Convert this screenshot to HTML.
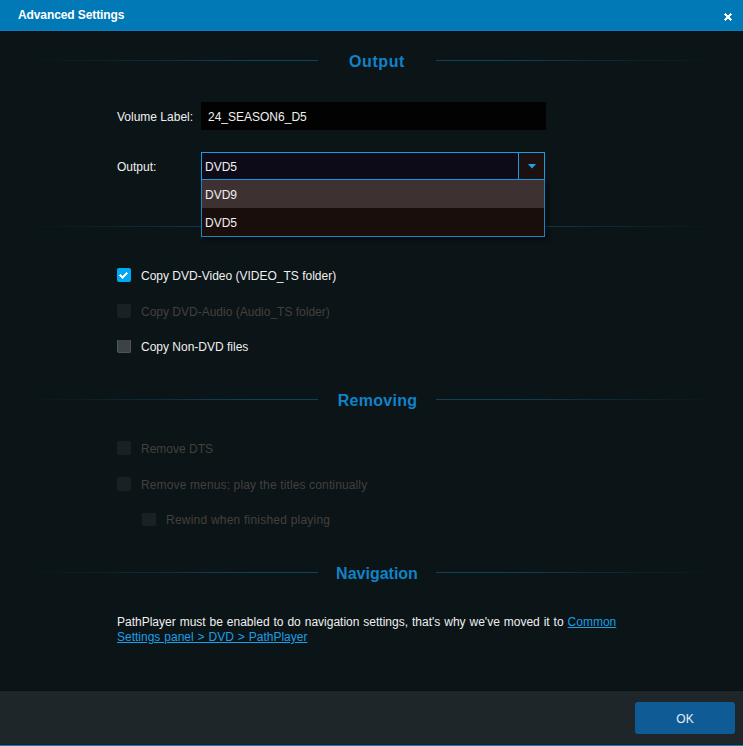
<!DOCTYPE html>
<html><head><meta charset="utf-8">
<style>
html,body{margin:0;padding:0;}
body{width:743px;height:746px;position:relative;overflow:hidden;background:#0b1417;font-family:"Liberation Sans",sans-serif;font-size:12px;color:#f0f0f0;}
.abs{position:absolute;}
#title{left:0;top:0;width:743px;height:31px;background:#0079b6;box-shadow:inset 0 -1px 0 #0282c4;}
#tline{left:0;top:31px;width:743px;height:1px;background:#0a0d0f;}
#title .t{left:18px;top:8px;letter-spacing:-0.1px;font-weight:bold;font-size:12px;color:#fff;line-height:15px;}
.line{height:1px;}
.ll{left:20px;width:703px;background:linear-gradient(to right,rgba(13,66,92,0) 0px,rgba(13,66,92,0.2) 60px,rgba(13,66,92,0.55) 140px,rgba(13,66,92,0.85) 190px,#0d425c 230px,#0d425c 480px,rgba(13,66,92,0.85) 520px,rgba(13,66,92,0.55) 570px,rgba(13,66,92,0.2) 650px,rgba(13,66,92,0) 703px);}
.lr{left:318px;width:118px;background:#0b1417;}
.h{font-weight:bold;font-size:16px;color:#1083c8;line-height:20px;width:743px;left:5px;text-align:center;letter-spacing:0.3px;}
.txt{line-height:15px;white-space:nowrap;}
.cb{width:14px;height:14px;border-radius:2px;box-sizing:border-box;}
.dis{color:#44403c;}
.cbd{background:#1a2125;}
#footer{left:0;top:691px;width:743px;height:53px;background:#1f2629;box-shadow:0 -1px 0 #0a0f11,0 1px 0 #1d1e1d;}
#bline{left:0;top:745px;width:743px;height:1px;background:#0a7fc0;}
#ok{left:635px;top:702px;width:100px;height:32px;border-radius:3px;background:#0f5b96;color:#e8eef4;text-align:center;line-height:34px;font-size:12px;}
a{color:#1b9fe6;text-decoration:underline;}
</style></head><body>
<div id="tline" class="abs"></div><div id="title" class="abs"><div class="t abs">Advanced Settings</div>
<svg class="abs" style="left:724px;top:13px" width="8" height="8" viewBox="0 0 8 8" shape-rendering="crispEdges" fill="#fff"><rect x="1" y="0" width="1" height="1"/><rect x="6" y="0" width="1" height="1"/><rect x="0" y="1" width="3" height="1"/><rect x="5" y="1" width="3" height="1"/><rect x="1" y="2" width="6" height="1"/><rect x="2" y="3" width="4" height="1"/><rect x="2" y="4" width="4" height="1"/><rect x="1" y="5" width="6" height="1"/><rect x="0" y="6" width="3" height="1"/><rect x="5" y="6" width="3" height="1"/><rect x="1" y="7" width="1" height="1"/><rect x="6" y="7" width="1" height="1"/></svg>
</div>

<!-- Output section -->
<div class="abs line ll" style="top:60px"></div>
<div class="abs line lr" style="top:60px"></div>
<div class="abs h" style="top:52px;letter-spacing:0.6px;left:5.5px">Output</div>

<div class="abs txt" style="left:117px;top:110px">Volume Label:</div>
<div class="abs" style="left:201px;top:102px;width:345px;height:28px;background:#020202"></div>
<div class="abs txt" style="left:208px;top:110px">24_SEASON6_D5</div>

<div class="abs txt" style="left:117px;top:160px">Output:</div>

<!-- Section line 2 -->
<div class="abs line ll" style="top:226px"></div>
<div class="abs line lr" style="top:226px"></div>

<!-- dropdown -->
<div class="abs" style="left:201px;top:152px;width:344px;height:28px;box-sizing:border-box;border:1px solid #1a9be2;background:#0d0b17"></div>
<div class="abs" style="left:518px;top:152px;width:27px;height:28px;box-sizing:border-box;border:1px solid #1a9be2;background:#1c1010"></div>
<svg class="abs" style="left:528px;top:164px" width="8" height="5" viewBox="0 0 8 5"><path d="M0 0H8L4 4.5Z" fill="#1aa6ee"/></svg>
<div class="abs txt" style="left:205px;top:160px">DVD5</div>
<div class="abs" style="left:201px;top:180px;width:344px;height:57px;box-sizing:border-box;border:1px solid #1386c4;border-top:none;background:#1a0e0d;box-shadow:3px 3px 4px rgba(0,0,0,0.45)"></div>
<div class="abs" style="left:202px;top:180px;width:342px;height:28px;background:#3d3231"></div>
<div class="abs txt" style="left:205px;top:188px">DVD9</div>
<div class="abs txt" style="left:205px;top:216px">DVD5</div>

<!-- checkboxes -->
<div class="abs cb" style="left:117px;top:268px;background:#00a9f5"></div>
<svg class="abs" style="left:117px;top:268px" width="14" height="14" viewBox="0 0 14 14" shape-rendering="crispEdges" fill="#fff"><rect x="9" y="4" width="1" height="1"/><rect x="8" y="5" width="3" height="1"/><rect x="3" y="6" width="1" height="1"/><rect x="7" y="6" width="3" height="1"/><rect x="2" y="7" width="3" height="1"/><rect x="6" y="7" width="3" height="1"/><rect x="3" y="8" width="5" height="1"/><rect x="4" y="9" width="3" height="1"/><rect x="5" y="10" width="1" height="1"/></svg>
<div class="abs txt" style="left:141px;top:269px">Copy DVD-Video (VIDEO_TS folder)</div>
<div class="abs cb cbd" style="left:117px;top:304px"></div>
<div class="abs txt dis" style="left:141px;top:305px">Copy DVD-Audio (Audio_TS folder)</div>
<div class="abs cb" style="left:117px;top:340px;height:13px;background:#3c4245;border:1px solid #50575a;border-top:none;border-radius:0 0 2px 2px"></div>
<div class="abs txt" style="left:141px;top:340px">Copy Non-DVD files</div>

<!-- Removing -->
<div class="abs line ll" style="top:399px"></div>
<div class="abs line lr" style="top:399px"></div>
<div class="abs h" style="top:391px;left:6px">Removing</div>

<div class="abs cb cbd" style="left:117px;top:441px"></div>
<div class="abs txt dis" style="left:141px;top:442px">Remove DTS</div>
<div class="abs cb cbd" style="left:117px;top:477px"></div>
<div class="abs txt dis" style="left:141px;top:478px;letter-spacing:0.135px">Remove menus; play the titles continually</div>
<div class="abs cb cbd" style="left:142px;top:513px;height:13px;border-radius:0 0 2px 2px"></div>
<div class="abs txt dis" style="left:166px;top:513px;letter-spacing:0.22px">Rewind when finished playing</div>

<!-- Navigation -->
<div class="abs line ll" style="top:572px"></div>
<div class="abs line lr" style="top:572px"></div>
<div class="abs h" style="top:564px;left:5.5px;letter-spacing:0">Navigation</div>

<div class="abs txt" style="left:117px;top:615px;white-space:normal;width:520px;word-spacing:0.6px">PathPlayer must be enabled to do navigation settings, that's why we've moved it to <a>Common Settings panel &gt; DVD &gt; PathPlayer</a></div>

<div id="footer" class="abs"></div>
<div id="bline" class="abs"></div>
<div id="ok" class="abs">OK</div>
</body></html>
